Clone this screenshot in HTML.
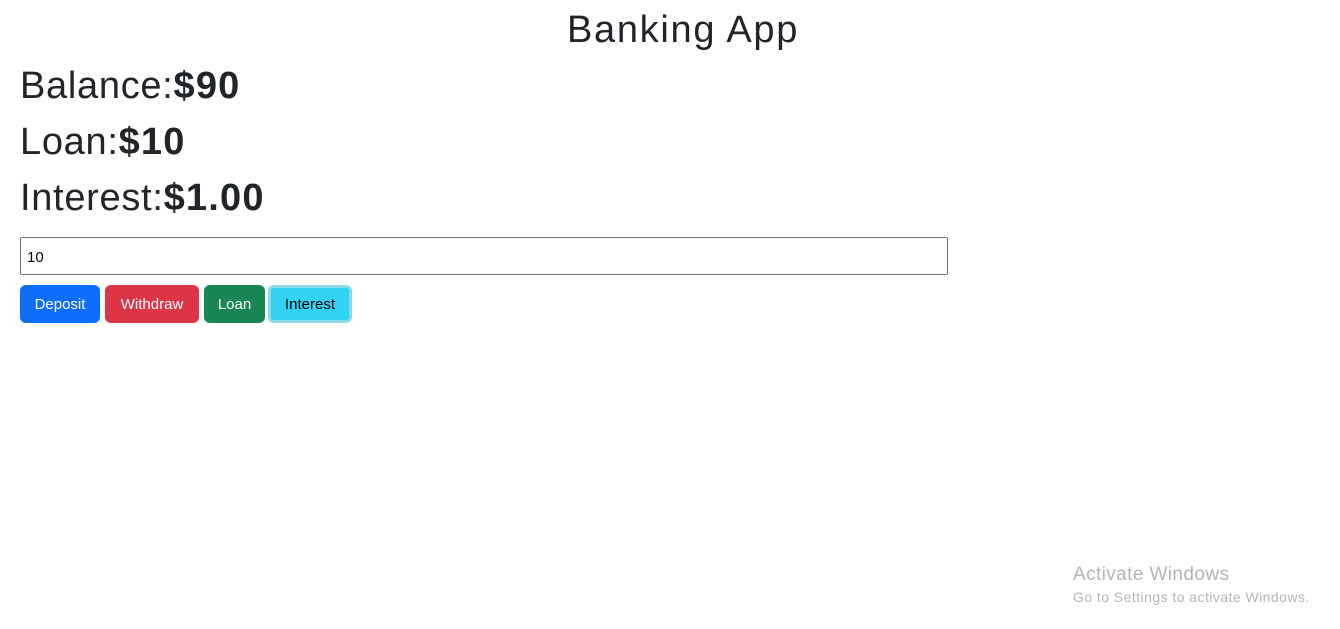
<!DOCTYPE html>
<html><head><style>
body{margin:0;width:1340px;height:629px;background:#fff;font-family:"Liberation Sans",sans-serif;color:#212529;position:relative;overflow:hidden}
h1{position:absolute;top:9px;left:0;width:1366px;text-align:center;margin:0;font-size:38px;font-weight:500;letter-spacing:1.7px}
.r{position:absolute;left:20px;margin:0;font-size:38px;font-weight:500;letter-spacing:0.7px}
.r b{font-weight:700;letter-spacing:1.2px}
input{position:absolute;left:20px;top:237px;width:928px;height:38px;box-sizing:border-box;border:1px solid #767676;border-radius:2px;font-size:15px;padding:2px 6px 0;font-family:"Liberation Sans",sans-serif}
.btn{position:absolute;top:285px;height:38px;box-sizing:border-box;border-radius:6px;color:#fff;font-size:15px;line-height:40px;text-align:center}
.w{position:absolute;left:1073px;color:#b4b4b4}
</style></head><body>
<h1>Banking App</h1>
<p class="r" style="top:65px">Balance:<b>$90</b></p>
<p class="r" style="top:121px">Loan:<b>$10</b></p>
<p class="r" style="top:177px">Interest:<b>$1.00</b></p>
<input value="10">
<div class="btn" style="left:20px;width:80px;background:#0d6efd">Deposit</div>
<div class="btn" style="left:105px;width:94px;background:#dc3545">Withdraw</div>
<div class="btn" style="left:204px;width:61px;background:#198754">Loan</div>
<div class="btn" style="left:268px;width:84px;background:#31d2f2;color:#000;border:3px solid #8ad8ea;line-height:34px">Interest</div>
<div class="w" style="top:564px;font-size:19px;letter-spacing:0.4px">Activate Windows</div>
<div class="w" style="top:589px;font-size:14px;letter-spacing:0.45px">Go to Settings to activate Windows.</div>
</body></html>
